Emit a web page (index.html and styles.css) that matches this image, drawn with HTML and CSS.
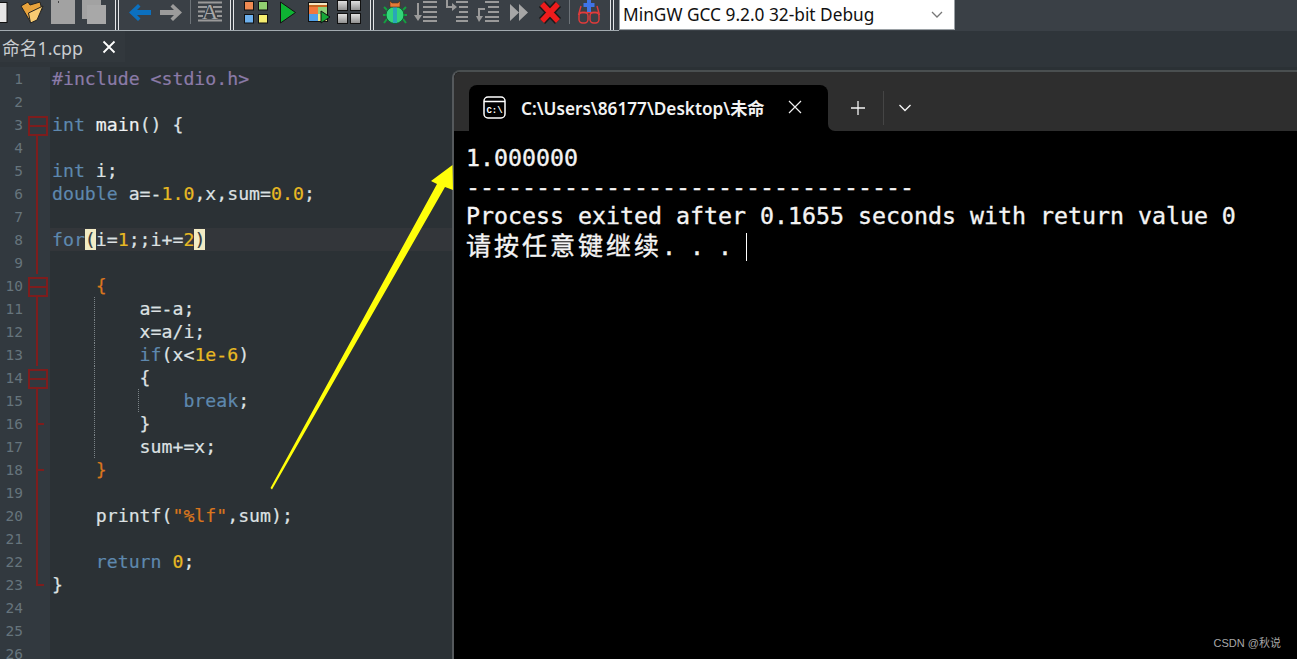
FILE: index.html
```html
<!DOCTYPE html>
<html lang="zh">
<head>
<meta charset="utf-8">
<title>Dev-C++</title>
<link rel="stylesheet" href="styles.css">
</head>
<body>
<div class="screen">
  <header class="toolbar">
    <div class="tools">
      <div class="group">
        <svg class="ico doc" width="8" height="24" viewBox="0 0 8 24"><rect x="-8" y="2.500" width="15" height="20" fill="#e6e6e6" stroke="#111"/></svg>
        <svg class="ico" width="24" height="24" viewBox="0 0 24 24"><path d="M1 6L8 2l2 3 10-3 2 8-9 3-2 10z" fill="#e8a33c" stroke="#222"/><path d="M8.500 13L23 6l-6 14-6.500 3z" fill="#f7cb72" stroke="#222"/></svg>
        <svg class="ico" width="24" height="24" viewBox="0 0 24 24"><rect width="24" height="24" fill="#a2a2a2"/><rect x="7" y="1" width="1" height="2" fill="#444"/></svg>
        <svg class="ico" width="24" height="24" viewBox="0 0 24 24"><rect width="19" height="19" fill="#a2a2a2"/><rect x="5" y="5" width="19" height="19" fill="#a8a8a8"/></svg>
      </div>
      <i class="sep"></i>
      <div class="group">
        <svg class="ico" width="24" height="24" viewBox="0 0 24 24"><path d="M1 12.500L10 4l2.500 2.500-3.500 3.500H23v5H9l3.500 3.500L10 21z" fill="#0b70bf"/></svg>
        <svg class="ico" width="24" height="24" viewBox="0 0 24 24"><path d="M23 12.500L14 4l-2.500 2.500 3.500 3.500H1v5h14l-3.500 3.500L14 21z" fill="#9b9b9b"/></svg>
        <i class="thin"></i>
        <svg class="ico" width="24" height="24" viewBox="0 0 24 24"><path d="M0 2.500h24M0 7h9m6 0h9M0 11.500h7m10 0h7M0 16h5m14 0h5M0 20.500h24" stroke="#9a9a9a" stroke-width="2"/><text class="ico-a" x="12" y="19" text-anchor="middle">A</text></svg>
      </div>
      <i class="sep sep-b"></i>
      <div class="group">
        <svg class="ico" width="24" height="24" viewBox="0 0 24 24"><g stroke="#111"><rect x=".5" y="1.500" width="9" height="8.500" fill="#ef8a52"/><rect x="14.500" y="1.500" width="9" height="8.500" fill="#90cf70"/><rect x=".5" y="14.500" width="9" height="8.500" fill="#6eb1ee"/><rect x="14.500" y="14.500" width="9" height="8.500" fill="#f6ee70"/></g></svg>
        <svg class="ico" width="24" height="24" viewBox="0 0 24 24"><path d="M5.500 2L20.500 12.500 5.500 23z" fill="#0eb233" stroke="#111"/></svg>
        <svg class="ico" width="24" height="24" viewBox="0 0 24 24"><rect x="2.500" y="2.500" width="19" height="19" fill="#f6e7c0" stroke="#111"/><rect x="3" y="5" width="18" height="2" fill="#c4661f"/><rect x="3" y="7" width="9" height="7" fill="#f0783c"/><rect x="12" y="7" width="9" height="7" fill="#8fd07a"/><rect x="3" y="14" width="9" height="7" fill="#4f9fe8"/><rect x="12" y="14" width="9" height="7" fill="#f3ea86"/><path d="M15 11l9 6-9 6z" fill="#16a838" stroke="#111"/></svg>
        <svg class="ico" width="24" height="24" viewBox="0 0 24 24"><defs><linearGradient id="gr" x1="0" y1="0" x2="0" y2="1"><stop offset="0" stop-color="#e4e4e4"/><stop offset="1" stop-color="#8c8c8c"/></linearGradient></defs><g stroke="#111" fill="url(#gr)"><rect x=".5" y=".5" width="10" height="10"/><rect x="13.500" y=".5" width="10" height="10"/><rect x=".5" y="13.500" width="10" height="10"/><rect x="13.500" y="13.500" width="10" height="10"/></g></svg>
      </div>
      <i class="sep"></i>
      <div class="group">
        <svg class="ico" width="24" height="24" viewBox="0 0 24 24"><path d="M4 10L1 7m3 8H0m4 4l-3 4m19-13l3-3m-3 8h4m-4 4l3 4" stroke="#14a040" stroke-width="2" fill="none"/><ellipse cx="12" cy="15" rx="9" ry="8.500" fill="#34d47a" stroke="#0c6a34"/><rect x="10" y="7" width="4" height="16" fill="#2aa6b8"/><path d="M7 7V1l2 2h6l2-2v6z" fill="#e57b38" stroke="#5a2c10" stroke-width=".6"/></svg>
        <svg class="ico" width="24" height="24" viewBox="0 0 24 24"><path d="M9 2h14M9 7h14M9 12h14M9 17h14M9 21h14" stroke="#9a9a9a" stroke-width="2"/><path d="M4 3v15" stroke="#9a9a9a" stroke-width="2"/><path d="M0 15h8l-4 6z" fill="#9a9a9a"/></svg>
        <svg class="ico" width="24" height="24" viewBox="0 0 24 24"><path d="M11 2h12M14 7h9M14 12h9M11 17h12M11 21h12" stroke="#9a9a9a" stroke-width="2"/><path d="M2 0v7h6" stroke="#9a9a9a" stroke-width="2" fill="none"/><path d="M7 3v8l5-4z" fill="#9a9a9a"/></svg>
        <svg class="ico" width="24" height="24" viewBox="0 0 24 24"><path d="M9 2h14M12 7h11M12 12h11M9 17h14M9 21h14" stroke="#9a9a9a" stroke-width="2"/><path d="M9 9H3v9" stroke="#9a9a9a" stroke-width="2" fill="none"/><path d="M0 16h7l-4 6z" fill="#9a9a9a"/></svg>
        <svg class="ico" width="24" height="24" viewBox="0 0 24 24"><path d="M3 4l9 8.500L3 21zM12 4l9 8.500L12 21z" fill="#a6a6a6"/></svg>
        <svg class="ico" width="24" height="24" viewBox="0 0 24 24"><path d="M4 4l16 17M20 4L4 21" stroke="#1a1a1a" stroke-width="8.500"/><path d="M4 4l16 17M20 4L4 21" stroke="#ee1c1c" stroke-width="5.500"/></svg>
        <i class="thin"></i>
        <svg class="ico" width="24" height="24" viewBox="0 0 24 24"><path d="M1.500 15L4 6M22.500 15L20 6M2 12.500h20" stroke="#e23b3b" stroke-width="1.400" fill="none"/><rect x="2" y="12.500" width="9" height="10.500" rx="3.500" fill="none" stroke="#e23b3b" stroke-width="1.400"/><rect x="13" y="12.500" width="9" height="10.500" rx="3.500" fill="none" stroke="#e23b3b" stroke-width="1.400"/><path d="M12 0v12M6.500 5h11" stroke="#3f74e6" stroke-width="4"/></svg>
      </div>
      <i class="sep sep-end"></i>
    </div>
    <div class="combo">
      <span>MinGW GCC 9.2.0 32-bit Debug</span>
      <svg width="12" height="8" viewBox="0 0 12 8"><path d="M1 1l5 5 5-5" stroke="#777" stroke-width="1.300" fill="none"/></svg>
    </div>
  </header>

  <div class="tabbar">
    <div class="filetab">
      <span>命名1.cpp</span>
      <svg width="14" height="14" viewBox="0 0 14 14"><path d="M1.500 1.500l11 11m0-11l-11 11" stroke="#fff" stroke-width="1.800"/></svg>
    </div>
  </div>

  <main class="editor">
    <div class="row"><span class="num">1</span><span class="fold"></span><code class="code pre">#include &lt;stdio.h&gt;</code></div>
    <div class="row"><span class="num">2</span><span class="fold"></span><code class="code"></code></div>
    <div class="row"><span class="num">3</span><span class="fold open"></span><code class="code"><b class="kw">int</b> <b class="fn">main</b>() {</code></div>
    <div class="row"><span class="num">4</span><span class="fold in"></span><code class="code"></code></div>
    <div class="row"><span class="num">5</span><span class="fold in"></span><code class="code"><b class="kw">int</b> i;</code></div>
    <div class="row"><span class="num">6</span><span class="fold in"></span><code class="code"><b class="kw">double</b> a=-<b class="nb">1.0</b>,x,sum=<b class="nb">0.0</b>;</code></div>
    <div class="row"><span class="num">7</span><span class="fold in"></span><code class="code"></code></div>
    <div class="row"><span class="num">8</span><span class="fold in"></span><code class="code active"><b class="kw">for</b><b class="match">(</b>i=<b class="nb">1</b>;;i+=<b class="nb">2</b><b class="match">)</b></code></div>
    <div class="row"><span class="num">9</span><span class="fold in"></span><code class="code"></code></div>
    <div class="row"><span class="num">10</span><span class="fold open"></span><code class="code">    <b class="st">{</b></code></div>
    <div class="row"><span class="num">11</span><span class="fold in"></span><code class="code guide">        a=-a;</code></div>
    <div class="row"><span class="num">12</span><span class="fold in"></span><code class="code guide">        x=a/i;</code></div>
    <div class="row"><span class="num">13</span><span class="fold in"></span><code class="code guide">        <b class="kw">if</b>(x&lt;<b class="nb">1e-6</b>)</code></div>
    <div class="row"><span class="num">14</span><span class="fold open"></span><code class="code guide">        {</code></div>
    <div class="row"><span class="num">15</span><span class="fold in"></span><code class="code guide guide2">            <b class="kw">break</b>;</code></div>
    <div class="row"><span class="num">16</span><span class="fold tick"></span><code class="code guide">        }</code></div>
    <div class="row"><span class="num">17</span><span class="fold in"></span><code class="code guide">        sum+=x;</code></div>
    <div class="row"><span class="num">18</span><span class="fold tick"></span><code class="code">    <b class="st">}</b></code></div>
    <div class="row"><span class="num">19</span><span class="fold in"></span><code class="code"></code></div>
    <div class="row"><span class="num">20</span><span class="fold in"></span><code class="code">    printf(<b class="st">"%lf"</b>,sum);</code></div>
    <div class="row"><span class="num">21</span><span class="fold in"></span><code class="code"></code></div>
    <div class="row"><span class="num">22</span><span class="fold in"></span><code class="code">    <b class="kw">return</b> <b class="nb">0</b>;</code></div>
    <div class="row"><span class="num">23</span><span class="fold end"></span><code class="code">}</code></div>
    <div class="row"><span class="num">24</span><span class="fold"></span><code class="code"></code></div>
    <div class="row"><span class="num">25</span><span class="fold"></span><code class="code"></code></div>
    <div class="row"><span class="num">26</span><span class="fold"></span><code class="code"></code></div>
  </main>

  <svg class="arrow" width="200" height="340" viewBox="260 160 200 340"><path d="M270.500 488L437 184l-6-3 21.500-16 .5 25-8-3L272 489.500z" fill="#ffff0a"/></svg>

  <section class="terminal">
    <div class="term-bar">
      <div class="term-tab">
        <svg width="23" height="23" viewBox="0 0 23 23"><rect x="1" y="1" width="21" height="21" rx="4" fill="none" stroke="#fff" stroke-width="1.500"/><path d="M1 5.500h21" stroke="#fff" stroke-width="1.500"/><text class="ico-c" x="11.500" y="17" text-anchor="middle">C:\</text></svg>
        <span class="term-title">C:\Users\86177\Desktop\未命</span>
        <svg class="term-x" width="14" height="14" viewBox="0 0 14 14"><path d="M1 1l12 12m0-12L1 13" stroke="#f0f0f0" stroke-width="1.200"/></svg>
      </div>
      <div class="term-rest">
        <svg class="plus" width="16" height="16" viewBox="0 0 16 16"><path d="M8 1v14M1 8h14" stroke="#f4f4f4" stroke-width="1.300"/></svg>
        <i class="term-div"></i>
        <svg class="chev" width="14" height="8" viewBox="0 0 14 8"><path d="M1.500 1l5.500 5.500L12.500 1" stroke="#f4f4f4" stroke-width="1.400" fill="none"/></svg>
      </div>
    </div>
    <div class="term-body">
      <div class="tline">1.000000</div>
      <div class="tline">--------------------------------</div>
      <div class="tline">Process exited after 0.1655 seconds with return value 0</div>
      <div class="tline"><span class="cjk">请按任意键继续</span>. . . <i class="caret"></i></div>
    </div>
  </section>

  <div class="mark">CSDN @秋说</div>
</div>
</body>
</html>
```

FILE: styles.css
```css
* { box-sizing: border-box; }
html, body { margin: 0; height: 100%; overflow: hidden; background: #2b3135; }
.screen { position: relative; height: 659px; overflow: hidden; background: #2b3135; }

/* toolbar */
.toolbar { display: flex; height: 31px; background: #3a4046; align-items: flex-start; }
.tools { display: flex; height: 31px; width: 619px; border-bottom: 1px solid #a3abb0; align-items: flex-start; }
.group { display: flex; gap: 7px; align-items: flex-start; }
.ico { display: block; flex: none; }
.doc { margin-right: 5px; }
.ico-a { font: 22px "Liberation Serif", serif; fill: #a8a8a8; }
.ico-c { font: bold 9px "Liberation Mono", monospace; fill: #fff; }
.sep { flex: none; width: 4px; height: 30px; margin: 0 9px; border-left: 1px solid #e4e6e8; border-right: 1px solid #e4e6e8; }
.sep-b { margin: 0 10px 0 8px; }
.sep-end { margin: 0 6px 0 9px; }
.thin { flex: none; width: 1px; height: 24px; background: #6d7378; }
.combo { display: flex; align-items: center; justify-content: space-between; width: 336px; height: 30px; padding: 0 11px 0 3px; background: #fff; border: 1px solid #9aa0a4; border-top: 0; font: 17.300px "Noto Sans", sans-serif; color: #111; }

/* file tabs */
.tabbar { height: 36px; background: #2f353a; }
.filetab { display: flex; align-items: center; justify-content: space-between; width: 125px; height: 31px; padding: 0 9px 0 2px; background: #32383d; font: 17.800px "Noto Sans", "Noto Sans CJK SC", sans-serif; color: #c9cdd1; }

/* editor */
.editor { font: 18.200px/23px "DejaVu Sans Mono", monospace; color: #dde1e3; -webkit-text-stroke: 0.2px; }
.row { display: flex; height: 23px; }
.num { flex: none; width: 23px; padding-top: 1px; text-align: right; font-size: 14.500px; color: #66747c; background: #32393f; -webkit-text-stroke: 0; }
.code { flex: 1; padding-left: 2px; font: inherit; white-space: pre; position: relative; }
.code b { font-weight: normal; }
.pre { color: #8b7ba8; }
.kw { color: #5e88ae; }
.fn { color: #eef0f2; }
.nb { color: #e8b923; }
.st { color: #d9761d; }
.active { background: #33363a; }
.match { background: #f2ebc4; color: #33383c; }
.guide::before, .guide2::after { content: ""; position: absolute; top: 0; bottom: 0; border-left: 1px dotted #7c8488; }
.guide::before { left: 44px; }
.guide2::after { left: 88px; }

/* fold markers */
.fold { position: relative; flex: none; width: 27px; background: #32393f; }
.fold.open::before, .fold.in::before, .fold.tick::before, .fold.end::before { content: ""; position: absolute; left: 13px; width: 2px; background: #7d1d1d; }
.fold.in::before, .fold.tick::before { top: 0; bottom: 0; }
.fold.open::before { top: 11px; bottom: 0; }
.fold.end::before { top: 0; height: 13px; }
.fold.open::after { content: ""; position: absolute; left: 5px; top: 3px; width: 16px; height: 16px; border: 2px solid #7d1d1d; background: linear-gradient(#7d1d1d, #7d1d1d) center / 100% 2px no-repeat, #32393f; }
.fold.tick::after, .fold.end::after { content: ""; position: absolute; left: 13px; top: 11px; width: 8px; height: 2px; background: #7d1d1d; }

/* overlays */
.arrow { position: absolute; left: 260px; top: 160px; z-index: 3; }

.terminal { position: absolute; left: 452px; top: 70px; right: 0; bottom: 0; z-index: 2; background: #000; border-top: 2px solid #4a4f50; border-left: 2px solid #55595c; border-top-left-radius: 8px; overflow: hidden; }
.term-bar { display: flex; height: 59px; background: #2e2e2e; padding-left: 15px; }
.term-tab { position: relative; display: flex; align-items: center; flex: none; width: 359px; margin-top: 13px; padding: 0 26px 2px 14px; background: #000; border-radius: 8px 8px 0 0; }
.term-tab::after { content: ""; position: absolute; right: -8px; bottom: 0; width: 8px; height: 8px; background: #000; }
.term-title { flex: 1; margin-left: 15px; font: 600 17.200px "Noto Sans", "Noto Sans CJK SC", sans-serif; color: #f2f2f2; white-space: nowrap; overflow: hidden; }
.term-rest { position: relative; z-index: 1; flex: 1; display: flex; align-items: center; padding: 12px 0 0 22px; background: #2e2e2e; border-bottom-left-radius: 7px; }
.term-div { width: 1px; height: 34px; margin: 0 14px 0 17px; background: #454545; }
.term-body { padding: 12px 0 0 12px; font: 23.250px/29px "DejaVu Sans Mono", monospace; color: #f4f4f4; -webkit-text-stroke: 0.35px; }
.tline { height: 29px; white-space: pre; }
.cjk { font: 25px/29px "Noto Sans CJK SC", sans-serif; letter-spacing: 3px; }
.caret { display: inline-block; width: 1px; height: 28px; background: #fff; vertical-align: -6px; }
.mark { position: absolute; right: 16px; bottom: 9px; z-index: 4; font: 11px "Liberation Sans", "Noto Sans CJK SC", sans-serif; color: #a8a8a8; }
```
